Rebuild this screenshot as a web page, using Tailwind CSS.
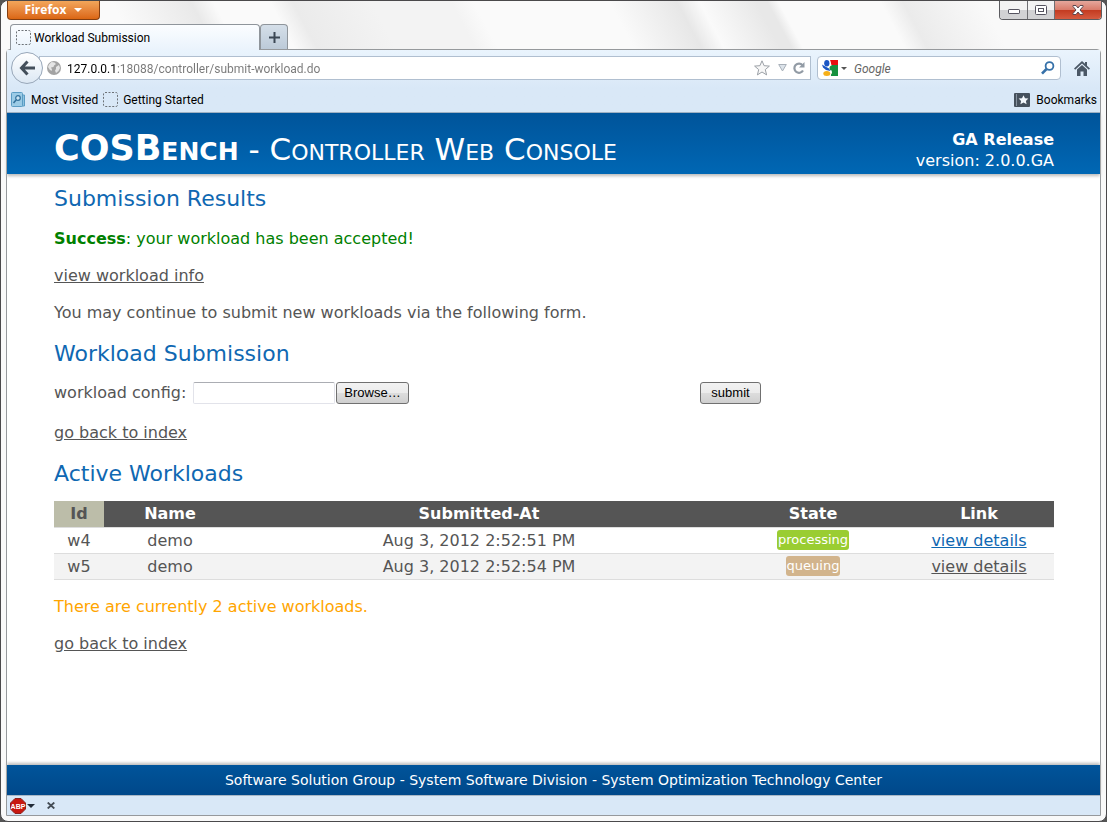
<!DOCTYPE html>
<html lang="en">
<head>
<meta charset="utf-8">
<meta name="viewport" content="width=device-width, initial-scale=1">
<title>Workload Submission</title>
<script src="https://cdn.jsdelivr.net/npm/@tailwindcss/browser@4"></script>
</head>
<body class="min-h-screen bg-[#555] font-[Roboto,sans-serif] text-xs text-black">
<div class="flex min-h-screen flex-col rounded-lg border border-[#4a494b] bg-[#f9f9f9] px-[5px] pb-[5px]">

  <!-- Title bar and tabs -->
  <header class="relative -mx-[5px] flex h-12 flex-col rounded-t-lg bg-[linear-gradient(62deg,#fafafa_0%,#fafafa_12%,#e9e9e9_19%,#fafafa_21%,#fafafa_26%,#ebebeb_28%,#f3f3f3_35%,#f3f3f3_42%,#fafafa_44%,#fafafa_56%,#e7e7e7_62%,#fafafa_64%,#e8e8e8_69%,#e8e8e8_70%,#fafafa_71%,#fafafa_80%,#ebebeb_82%,#f9f9f9_89%,#f9f9f9_100%)] px-[6px]">
    <div class="flex items-start justify-between">
      <button class="flex h-[19px] w-[93px] items-center justify-center gap-2 rounded-b-sm border border-t-0 border-[#843e10] bg-linear-to-b from-[#f2a65a] to-[#db6611] font-['Open_Sans',sans-serif] text-xs font-bold text-white">Firefox
        <svg class="h-1 w-2" viewBox="0 0 8 4" fill="#fff" aria-hidden="true"><path d="M0 0h8L4 4z"/></svg>
      </button>
      <div class="-mr-[2px] flex h-[19px] overflow-hidden rounded-b border border-t-0 border-[#5c5c60]">
        <button aria-label="Minimize" class="flex w-7 items-center justify-center border-r border-[#6e6e72] bg-linear-to-b from-[#f3f3f3] from-50% to-[#d2d2d4] to-50%"><svg class="mt-1 h-[6px] w-3" viewBox="0 0 12 6" aria-hidden="true"><rect x=".5" y=".5" width="11" height="4" rx=".6" fill="#fff" stroke="#55535f"/></svg></button>
        <button aria-label="Maximize" class="flex w-[27px] items-center justify-center border-r border-[#6e6e72] bg-linear-to-b from-[#f3f3f3] from-50% to-[#d2d2d4] to-50%"><svg class="h-[10px] w-3" viewBox="0 0 12 10" fill="#fff" stroke="#55535f" aria-hidden="true"><rect x=".5" y=".5" width="11" height="9" rx="1"/><rect x="3.5" y="3.5" width="5" height="3"/></svg></button>
        <button aria-label="Close" class="flex w-[46px] items-center justify-center bg-[linear-gradient(#e5a79c,#d87a69_50%,#c33a20_50%,#d65b40)]"><svg class="h-[10px] w-3" viewBox="0 0 12 10" aria-hidden="true"><path d="M1 .5h3L6 3 8 .5h3v1L8 5l3 3.500v1H8L6 7 4 9.500H1v-1L4 5 1 1.500z" fill="#fff" stroke="#5c4850"/></svg></button>
      </div>
    </div>
    <div class="mt-1 flex h-[25px] shrink-0 items-end pl-[3px]">
      <div class="relative z-10 flex h-[26px] w-[250px] items-center gap-[3px] self-start rounded-t border border-b-0 border-[#8f959b] bg-linear-to-b from-[#fbfdff] to-[#eaf3fc] pl-[5px]">
        <svg class="h-[15px] w-[15px]" viewBox="0 0 15 15" aria-hidden="true"><rect x=".5" y=".5" width="14" height="14" rx="1.500" fill="none" stroke="#6d7277" stroke-dasharray="2 1.500"/></svg>
        <span>Workload Submission</span>
      </div>
      <button aria-label="Open a new tab" class="flex h-[25px] w-7 items-center justify-center rounded-t border border-b-0 border-[#8f959b] bg-linear-to-b from-[#d5dfe9] to-[#bccad8]"><svg class="h-[11px] w-[11px]" viewBox="0 0 11 11" fill="#3b4754" aria-hidden="true"><path d="M4.500 0h2v4.500H11v2H6.500V11h-2V6.500H0v-2h4.500z"/></svg></button>
    </div>
  </header>

  <div class="flex flex-1 flex-col rounded-t-sm border border-[#96999c] bg-white">
    <!-- Navigation and bookmarks toolbars -->
    <div class="bg-linear-to-b from-[#eaf4fd] to-[#d9e8f7] to-60%">
      <nav class="flex h-9 items-center pr-[10px] pl-1">
        <button aria-label="Back" class="z-10 flex h-8 w-8 shrink-0 items-center justify-center rounded-full border border-[#98a7b9] bg-linear-to-b from-white to-[#dce8f4]"><svg class="h-4 w-4" viewBox="0 0 16 16" fill="none" stroke="#434f5b" stroke-width="3" aria-hidden="true"><path d="M8.500 1.500 2.500 8l6 6.500M3 8h13"/></svg></button>
        <div class="-ml-1 flex h-6 flex-1 items-center border border-[#b0bfd0] bg-white pr-[5px] pl-[7px]">
          <svg class="h-[14px] w-[14px] shrink-0" viewBox="0 0 14 14" aria-hidden="true"><circle cx="7" cy="7" r="7" fill="#a3a3a3"/><path d="M2 3.500 4.500 1l3 .5L9 3 7 4.500 6.500 6 4 6.500 5 8.500 4.500 10 2.500 8.500 1 6zM9 6l3-2 1 3-1.500 3L9 12l-1-2.500 1-1.500z" fill="#e5e5e5"/></svg>
          <input type="text" aria-label="Address" value="127.0.0.1:18088/controller/submit-workload.do" class="ml-[6px] h-[22px] min-w-0 flex-1 bg-[linear-gradient(90deg,#000_49px,#777_49px)] bg-clip-text pt-px text-xs text-transparent outline-none">
          <svg class="mr-2 h-4 w-4" viewBox="0 0 16 16" fill="#f7f7f7" stroke="#9ba0a6" aria-hidden="true"><path d="m8 .8 2.100 4.900 5.300.4-4.100 3.500 1.300 5.300L8 12l-4.600 2.900 1.300-5.300L.6 6.100l5.300-.4z"/></svg>
          <svg class="mr-[6px] h-2 w-[9px]" viewBox="0 0 9 8" fill="#dce3ea" stroke="#a8b0b9" aria-hidden="true"><path d="M.7.5h7.600L4.500 7z"/></svg>
          <svg class="h-3 w-3" viewBox="0 0 12 12" aria-hidden="true"><path d="M9.500 3.200A4.600 4.600 0 1 0 10 8.500" fill="none" stroke="#929ba5" stroke-width="2.200"/><path d="M11.500 0v5.500H6z" fill="#929ba5"/></svg>
        </div>
        <div class="ml-[6px] flex h-6 w-[244px] items-center rounded-sm border border-[#b0bfd0] bg-white pr-[5px] pl-1">
          <svg class="h-4 w-4" viewBox="0 0 16 16" aria-hidden="true"><path d="M8 0h8v5H9z" fill="#e60f0f"/><path d="M9 5h7v11H8l2-3z" fill="#15913f"/><path d="M0 0h8l2 7-2 3 1 6H0z" fill="#fff"/><ellipse cx="4.800" cy="3.300" rx="2.600" ry="3.200" fill="#1a56c4"/><path d="M0 4.500 2.500 6 7 8.500 8.500 11 4 10 1 7.500z" fill="#1a56c4"/><circle cx="10" cy="8" r="2.500" fill="#15913f"/><ellipse cx="4.800" cy="13.500" rx="3.500" ry="2.500" fill="#f6b01a"/></svg>
          <svg class="ml-[3px] h-[3px] w-[6px]" viewBox="0 0 6 3" fill="#555" aria-hidden="true"><path d="M0 0h6L3 3z"/></svg>
          <input type="text" aria-label="Search" placeholder="Google" class="ml-[7px] h-[22px] min-w-0 flex-1 pt-px text-xs italic outline-none placeholder:text-[#666]">
          <svg class="h-[14px] w-[14px]" viewBox="0 0 14 14" fill="none" stroke="#3671a9" aria-hidden="true"><circle cx="8.500" cy="5" r="3.900" stroke-width="1.800"/><path d="M5.500 8 1 12.700" stroke-width="2.600"/></svg>
        </div>
        <button aria-label="Home" class="ml-[13px]"><svg class="h-[15px] w-4" viewBox="0 0 16 15" fill="#4b5866" aria-hidden="true"><path d="M8 0 0 7.500l1.200 1.200L8 2.500l6.800 6.200L16 7.500l-3-2.800V1h-2v1.800z"/><path d="M8 4 3 8.500V15h3.500v-4.500h3V15H13V8.500z"/></svg></button>
      </nav>
      <div class="flex h-[27px] items-center justify-between border-b border-[#9eb0c3] pt-px pr-[3px] pl-1">
        <div class="flex items-center gap-[5px]">
          <a href="#visited" class="flex items-center gap-[6px]"><svg class="h-[15px] w-[14px]" viewBox="0 0 14 15" aria-hidden="true"><path d="M3 3h10.500v11H3z" fill="#8fc3e0" stroke="#5b9cc4"/><rect x=".5" y=".5" width="11" height="14" rx="1" fill="#9ccbe6" stroke="#5b9cc4"/><circle cx="7" cy="6" r="2.300" fill="#c9e4f4" stroke="#33719c" stroke-width="1.200"/><path d="M5.300 7.800 2.500 11" stroke="#33719c" stroke-width="1.600"/></svg>Most Visited</a>
          <a href="#start" class="flex items-center gap-[5px]"><svg class="h-[15px] w-[15px]" viewBox="0 0 15 15" aria-hidden="true"><rect x=".5" y=".5" width="14" height="14" rx="1.500" fill="none" stroke="#6d7277" stroke-dasharray="2 1.500"/></svg>Getting Started</a>
        </div>
        <button class="flex items-center gap-[6px]"><svg class="h-[14px] w-4" viewBox="0 0 16 14" aria-hidden="true"><rect width="16" height="14" rx="1" fill="#46515d"/><path d="M2.500 1v12" stroke="#8793a0"/><path d="m9.500 2.200 1.500 3 3.400.4-2.500 2.300.7 3.400-3.100-1.700-3.100 1.700.7-3.400-2.500-2.300L8 5.200z" fill="#f4f8fc"/></svg>Bookmarks</button>
      </div>
    </div>

    <!-- Page -->
    <div class="flex flex-1 flex-col font-['DejaVu_Sans',sans-serif] text-base text-[#555]">
      <div class="flex h-[61px] items-center justify-between bg-linear-to-b from-[#00549a] to-[#0067b4] pr-[46px] pl-[47px] text-white shadow-[0_2px_3px_#bbb]">
        <h1 class="mt-2.5 text-[31px] leading-9 [font-variant:small-caps]"><strong class="text-[35px]">COSBench</strong> - Controller Web Console</h1>
        <div class="mt-3 text-right leading-[21px]"><strong>GA Release</strong><br>version: 2.0.0.GA</div>
      </div>

      <main class="flex flex-1 flex-col pt-[9px] pr-[46px] pl-[47px]">
        <h2 class="text-[22px] leading-8 text-[#0f68b2]">Submission Results</h2>
        <p class="mt-3 leading-6 text-[green]"><strong>Success</strong>: your workload has been accepted!</p>
        <p class="mt-[13px] leading-6"><a href="#info" class="underline">view workload info</a></p>
        <p class="mt-[13px] leading-6">You may continue to submit new workloads via the following form.</p>
        <h2 class="mt-[13px] text-[22px] leading-8 text-[#0f68b2]">Workload Submission</h2>
        <form class="mt-[11px] flex h-6 items-center">
          <label for="config" class="w-[139px]">workload config:</label>
          <input id="config" type="text" class="h-[22px] w-[142px] rounded-xs border border-[#e2e3ea] border-t-[#abadb3] bg-white px-1 text-[13px]">
          <button type="button" class="ml-px h-[22px] w-[73px] rounded-[3px] border border-[#707070] bg-[linear-gradient(#f2f2f2,#ebebeb_50%,#dddddd_50%,#cfcfcf)] font-['Liberation_Sans',sans-serif] text-[13px] text-black">Browse…</button>
          <button type="submit" class="ml-[291px] h-[22px] w-[61px] rounded-[3px] border border-[#707070] bg-[linear-gradient(#f2f2f2,#ebebeb_50%,#dddddd_50%,#cfcfcf)] font-['Liberation_Sans',sans-serif] text-[13px] text-black">submit</button>
        </form>
        <p class="mt-4 leading-6"><a href="#index" class="underline">go back to index</a></p>
        <h2 class="mt-[13px] text-[22px] leading-8 text-[#0f68b2]">Active Workloads</h2>
        <table class="mt-[11px] w-full table-fixed border-collapse text-center leading-[25px]">
          <colgroup><col class="w-[5%]"><col class="w-[13.2%]"><col class="w-[48.6%]"><col class="w-[18.2%]"><col class="w-[15%]"></colgroup>
          <thead>
            <tr class="h-[26px] border-b border-[#ddd] bg-[#555] text-white"><th class="bg-[#bcbda9] text-[#555]">Id</th><th>Name</th><th>Submitted-At</th><th>State</th><th>Link</th></tr>
          </thead>
          <tbody>
            <tr class="h-[26px] border-b border-[#ddd]"><td>w4</td><td>demo</td><td>Aug 3, 2012 2:52:51 PM</td><td class="align-middle"><span class="mx-auto block h-5 w-fit rounded-[3px] bg-[#9acd32] px-px text-[13px] leading-5 text-white">processing</span></td><td><a href="#w4" class="text-[#0f68b2] underline">view details</a></td></tr>
            <tr class="h-[26px] border-b border-[#ddd] bg-[#f3f3f3]"><td>w5</td><td>demo</td><td>Aug 3, 2012 2:52:54 PM</td><td class="align-middle"><span class="mx-auto block h-5 w-fit rounded-[3px] bg-[#d2b48c] px-px text-[13px] leading-5 text-white">queuing</span></td><td><a href="#w5" class="underline">view details</a></td></tr>
          </tbody>
        </table>
        <p class="mt-[15px] leading-6 text-[orange]">There are currently 2 active workloads.</p>
        <p class="mt-[13px] leading-6"><a href="#index" class="underline">go back to index</a></p>
      </main>

      <footer class="flex h-[30px] items-center justify-center bg-linear-to-b from-[#00549a] to-[#00488a] text-sm text-white shadow-[0_-2px_3px_#bbb]">Software Solution Group - System Software Division - System Optimization Technology Center</footer>
    </div>

    <!-- Add-on bar -->
    <div class="flex h-5 items-center border-t border-[#a9b7c6] bg-[#d9e8f7] pl-[3px]">
      <button aria-label="Adblock Plus" class="flex items-center gap-px"><svg class="h-4 w-4" viewBox="0 0 16 16" aria-hidden="true"><path d="M5 .5h6L15.500 5v6L11 15.500H5L.5 11V5z" fill="#c81810" stroke="#8c211b"/><text x="8" y="10.500" text-anchor="middle" font-family="Liberation Sans Narrow, Liberation Sans, sans-serif" font-size="7" font-weight="700" fill="#fff">ABP</text></svg><svg class="h-1 w-2" viewBox="0 0 8 4" fill="#222b38" aria-hidden="true"><path d="M0 0h8L4 4z"/></svg></button>
      <button aria-label="Close add-on bar" class="ml-3"><svg class="h-[7px] w-2" viewBox="0 0 8 7" stroke="#444c55" stroke-width="1.800" aria-hidden="true"><path d="m.7.500 6.600 6M7.300.5l-6.600 6"/></svg></button>
    </div>
  </div>
</div>
</body>
</html>
